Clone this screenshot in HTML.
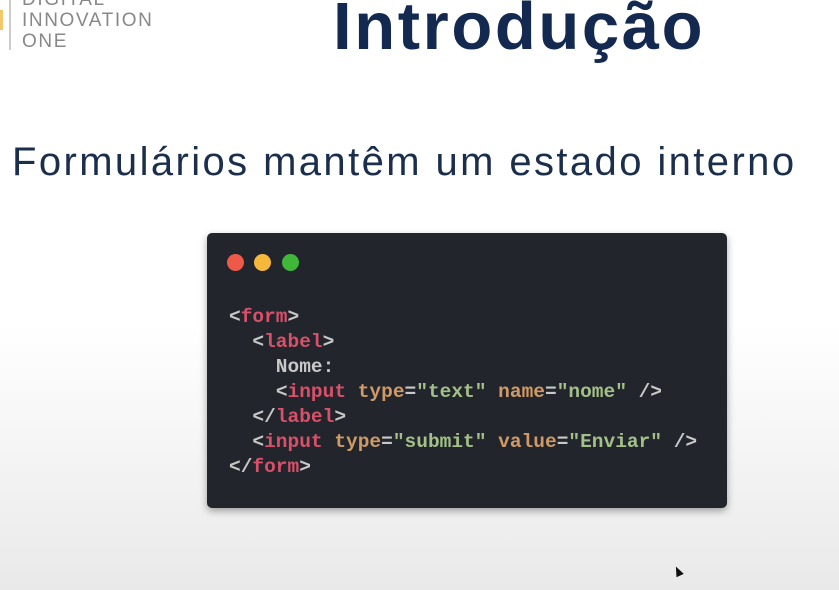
<!DOCTYPE html>
<html><head><meta charset="utf-8"><style>
body{margin:0;width:839px;height:590px;overflow:hidden;background:linear-gradient(#fff 0%,#fff 55%,#e9e9e9 100%);font-family:"Liberation Sans",sans-serif;position:relative}
.logo{position:absolute;left:22px;top:-11px;color:#888;font-size:19px;line-height:21px;letter-spacing:1.6px}
.bar{position:absolute;left:9px;top:0;width:2px;height:50px;background:#ccc}
.yel{position:absolute;left:0;top:10px;width:3px;height:20px;background:#f3c86a}
h1{position:absolute;left:333px;top:-12px;margin:0;font-size:67px;font-weight:bold;color:#13294f;letter-spacing:2.6px;white-space:nowrap}
h2{position:absolute;left:12px;top:140px;margin:0;font-size:40px;font-weight:normal;color:#1b2f4c;white-space:nowrap;letter-spacing:2.4px}
.box{position:absolute;left:207px;top:233px;width:520px;height:275px;background:#22252b;border-radius:5px;box-shadow:0 3px 8px rgba(0,0,0,.35)}
.d{position:absolute;top:21px;width:17px;height:17px;border-radius:50%}
pre{position:absolute;left:22px;top:72px;margin:0;font-family:"Liberation Mono",monospace;font-size:19.5px;line-height:25px;color:#c8c8c8;font-weight:bold}
.t{color:#d9506a}.a{color:#d09a66}.s{color:#a2c088}.p{color:#c7c7c7}
</style></head><body>
<div class="yel"></div><div class="bar"></div>
<div class="logo">DIGITAL<br>INNOVATION<br>ONE</div>
<h1>Introdução</h1>
<h2>Formulários mantêm um estado interno</h2>
<div class="box">
<div class="d" style="left:20px;background:#ee5a4a"></div>
<div class="d" style="left:47px;background:#f5b83a"></div>
<div class="d" style="left:75px;background:#3fb83a"></div>
<pre><span class="p">&lt;</span><span class="t">form</span><span class="p">&gt;</span>
  <span class="p">&lt;</span><span class="t">label</span><span class="p">&gt;</span>
    Nome:
    <span class="p">&lt;</span><span class="t">input</span> <span class="a">type</span>=<span class="s">"text"</span> <span class="a">name</span>=<span class="s">"nome"</span> /&gt;
  <span class="p">&lt;/</span><span class="t">label</span><span class="p">&gt;</span>
  <span class="p">&lt;</span><span class="t">input</span> <span class="a">type</span>=<span class="s">"submit"</span> <span class="a">value</span>=<span class="s">"Enviar"</span> /&gt;
<span class="p">&lt;/</span><span class="t">form</span><span class="p">&gt;</span></pre>
</div>
<div style="position:absolute;left:674px;top:566px;width:0;height:0;border-left:4px solid transparent;border-right:4px solid transparent;border-bottom:10px solid #111;transform:rotate(-25deg)"></div>
</body></html>
